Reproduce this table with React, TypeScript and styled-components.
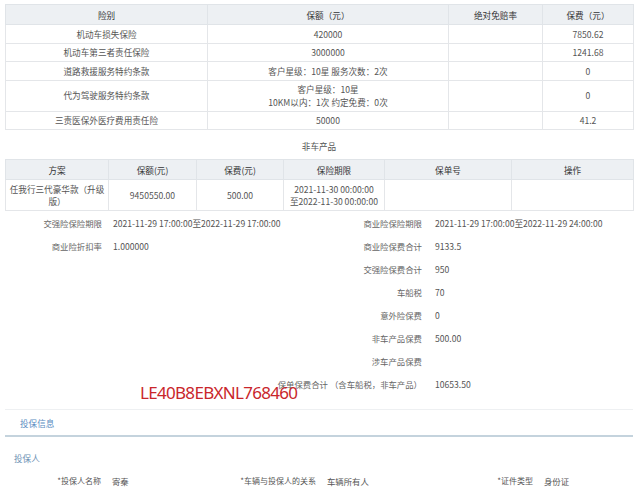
import React from "react";
import styled, { createGlobalStyle } from "styled-components";

const GlobalStyle = createGlobalStyle`
  html, body { margin: 0; padding: 0; background: #ffffff; }
  body { font-family: "Noto Sans CJK SC", "Noto Sans", sans-serif; color: #555; }
  * { box-sizing: border-box; }
`;

const Page = styled.div`
  width: 640px;
  height: 490px;
  overflow: hidden;
  padding: 4px 7px 0 5px;
  position: relative;
`;

const Table = styled.table`
  width: 628px;
  border-collapse: collapse;
  table-layout: fixed;
  font-size: 8.6px;
`;

const Th = styled.th`
  background: #edf0f3;
  color: #333;
  font-weight: normal;
  height: 20px;
  padding: 0 3px;
  border: 1px solid #e0e4e8;
  text-align: center;
`;

const Td = styled.td`
  color: #555;
  padding: 2.5px 2px;
  line-height: 12.5px;
  border: 1px solid #e4e6e9;
  text-align: center;
  vertical-align: middle;
`;

const Caption = styled.div`
  text-align: center;
  font-size: 8.6px;
  color: #555;
  padding: 10px 0 7px;
  line-height: 12px;
`;

const Info = styled.div`
  display: grid;
  grid-template-columns: 317px 1fr;
  margin-top: 0;
  font-size: 8.4px;
`;

const InfoColumn = styled.div`
  display: flex;
  flex-direction: column;
`;

const InfoRow = styled.div`
  display: flex;
  align-items: center;
  height: 23px;
`;

const InfoLabel = styled.div<{ $w: number }>`
  width: ${(p) => p.$w}px;
  flex: none;
  display: flex;
  justify-content: flex-end;
  white-space: nowrap;
  color: #666;
`;

const InfoValue = styled.div<{ $gap: number }>`
  margin-left: ${(p) => p.$gap}px;
  white-space: nowrap;
  color: #555;
  font-size: 8.6px;
`;

const Watermark = styled.div`
  position: absolute;
  left: 140px;
  top: 381px;
  font-family: "Noto Sans", "Liberation Sans", sans-serif;
  font-size: 17px;
  color: #c9262b;
  letter-spacing: -0.7px;
  white-space: nowrap;
`;

const SectionBar = styled.div`
  margin-top: 14px;
  height: 28px;
  border-top: 1px solid #eef0f2;
  border-bottom: 2px solid #c4d3dd;
  display: flex;
  align-items: center;
  padding-left: 15px;
  font-size: 8.6px;
  color: #5a8cbf;
`;

const SubTitle = styled.div`
  font-size: 8.6px;
  color: #6b90b3;
  padding: 15px 0 0 9px;
  line-height: 12px;
`;

const PartyRow = styled.div`
  display: grid;
  grid-template-columns: 235px 255px 1fr;
  margin-top: 11px;
  font-size: 8px;
  line-height: 12px;
`;

const PartyField = styled.div`
  display: flex;
  align-items: center;
`;

const PartyLabel = styled.div<{ $w: number }>`
  width: ${(p) => p.$w}px;
  flex: none;
  display: flex;
  justify-content: flex-end;
  color: #555;
  white-space: nowrap;
`;

const PartyValue = styled.div`
  margin-left: 11px;
  color: #555;
  white-space: nowrap;
  font-size: 8.4px;
`;

const coverage = [
  { name: "机动车损失保险", amount: ["420000"], fee: "7850.62" },
  { name: "机动车第三者责任保险", amount: ["3000000"], fee: "1241.68" },
  { name: "道路救援服务特约条款", amount: ["客户星级：10星 服务次数：2次"], fee: "0" },
  { name: "代为驾驶服务特约条款", amount: ["客户星级：10星", "10KM以内：1次 约定免费：0次"], fee: "0" },
  { name: "三责医保外医疗费用责任险", amount: ["50000"], fee: "41.2" },
];

const rightInfo = [
  ["商业险保险期限", "2021-11-29 17:00:00至2022-11-29 24:00:00"],
  ["商业险保费合计", "9133.5"],
  ["交强险保费合计", "950"],
  ["车船税", "70"],
  ["意外险保费", "0"],
  ["非车产品保费", "500.00"],
  ["涉车产品保费", ""],
  ["保单保费合计 （含车船税，非车产品）", "10653.50"],
];

const leftInfo = [
  ["交强险保险期限", "2021-11-29 17:00:00至2022-11-29 17:00:00"],
  ["商业险折扣率", "1.000000"],
];

export default function App() {
  return (
    <>
      <GlobalStyle />
      <Page>
        <Table>
          <colgroup>
            <col style={{ width: 202 }} />
            <col style={{ width: 241 }} />
            <col style={{ width: 94 }} />
            <col style={{ width: 91 }} />
          </colgroup>
          <thead>
            <tr>
              <Th>险别</Th>
              <Th>保额（元）</Th>
              <Th>绝对免赔率</Th>
              <Th>保费（元）</Th>
            </tr>
          </thead>
          <tbody>
            {coverage.map((r) => (
              <tr key={r.name}>
                <Td>{r.name}</Td>
                <Td>
                  {r.amount.map((a) => (
                    <div key={a}>{a}</div>
                  ))}
                </Td>
                <Td></Td>
                <Td>{r.fee}</Td>
              </tr>
            ))}
          </tbody>
        </Table>

        <Caption>非车产品</Caption>

        <Table>
          <colgroup>
            <col style={{ width: 103 }} />
            <col style={{ width: 88 }} />
            <col style={{ width: 87 }} />
            <col style={{ width: 101 }} />
            <col style={{ width: 127 }} />
            <col style={{ width: 122 }} />
          </colgroup>
          <thead>
            <tr>
              <Th>方案</Th>
              <Th>保额(元)</Th>
              <Th>保费(元)</Th>
              <Th>保险期限</Th>
              <Th>保单号</Th>
              <Th>操作</Th>
            </tr>
          </thead>
          <tbody>
            <tr>
              <Td>任我行三代豪华款（升级版）</Td>
              <Td>9450550.00</Td>
              <Td>500.00</Td>
              <Td>
                <div>2021-11-30 00:00:00</div>
                <div>至2022-11-30 00:00:00</div>
              </Td>
              <Td></Td>
              <Td></Td>
            </tr>
          </tbody>
        </Table>

        <Info>
          <InfoColumn>
            {leftInfo.map(([l, v]) => (
              <InfoRow key={l}>
                <InfoLabel $w={97}>{l}</InfoLabel>
                <InfoValue $gap={11}>{v}</InfoValue>
              </InfoRow>
            ))}
          </InfoColumn>
          <InfoColumn>
            {rightInfo.map(([l, v]) => (
              <InfoRow key={l}>
                <InfoLabel $w={100}>{l}</InfoLabel>
                <InfoValue $gap={13}>{v}</InfoValue>
              </InfoRow>
            ))}
          </InfoColumn>
        </Info>

        <SectionBar>投保信息</SectionBar>
        <SubTitle>投保人</SubTitle>
        <PartyRow>
          <PartyField>
            <PartyLabel $w={96}>*投保人名称</PartyLabel>
            <PartyValue>寄秦</PartyValue>
          </PartyField>
          <PartyField>
            <PartyLabel $w={76}>*车辆与投保人的关系</PartyLabel>
            <PartyValue>车辆所有人</PartyValue>
          </PartyField>
          <PartyField>
            <PartyLabel $w={38}>*证件类型</PartyLabel>
            <PartyValue>身份证</PartyValue>
          </PartyField>
        </PartyRow>

        <Watermark>LE40B8EBXNL768460</Watermark>
      </Page>
    </>
  );
}
